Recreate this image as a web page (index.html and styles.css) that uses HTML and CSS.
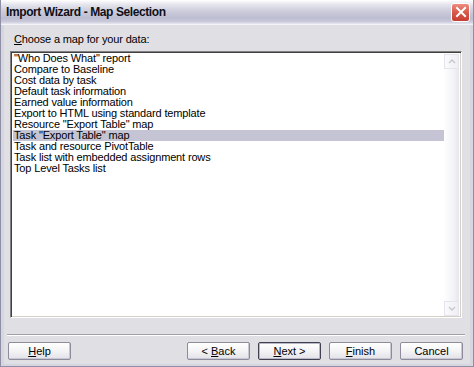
FILE: index.html
```html
<!DOCTYPE html>
<html lang="en">

<head>
    <meta charset="UTF-8">
    <title>Import Wizard - Map Selection</title>
    <link rel="stylesheet" href="styles.css">
</head>

<body>
    <div class="window">
        <div class="titlebar">
            <span class="title">Import Wizard - Map Selection</span>
            <span class="close">
                <svg width="12" height="12" viewBox="0 0 12 12">
                    <path d="M2 2 L10 10 M10 2 L2 10" stroke="#fff" stroke-width="2" stroke-linecap="square" />
                </svg>
            </span>
        </div>

        <div class="content">
            <div class="label"><u>C</u>hoose a map for your data:</div>

            <div class="listbox">
                <ul class="items">
                    <li>"Who Does What" report</li>
                    <li>Compare to Baseline</li>
                    <li>Cost data by task</li>
                    <li>Default task information</li>
                    <li>Earned value information</li>
                    <li>Export to HTML using standard template</li>
                    <li>Resource "Export Table" map</li>
                    <li class="selected">Task "Export Table" map</li>
                    <li>Task and resource PivotTable</li>
                    <li>Task list with embedded assignment rows</li>
                    <li>Top Level Tasks list</li>
                </ul>
                <div class="scrollbar">
                    <div class="arrow">
                        <svg width="8" height="5" viewBox="0 0 8 5">
                            <path d="M1 4 L4 1 L7 4" fill="none" stroke="#c8c8d4" stroke-width="1.5" />
                        </svg>
                    </div>
                    <div class="track"></div>
                    <div class="arrow">
                        <svg width="8" height="5" viewBox="0 0 8 5">
                            <path d="M1 1 L4 4 L7 1" fill="none" stroke="#c8c8d4" stroke-width="1.5" />
                        </svg>
                    </div>
                </div>
            </div>

            <div class="separator"></div>

            <div class="buttons">
                <button class="btn"><u>H</u>elp</button>
                <div class="spacer"></div>
                <button class="btn">&lt; <u>B</u>ack</button>
                <button class="btn default"><u>N</u>ext &gt;</button>
                <button class="btn"><u>F</u>inish</button>
                <button class="btn">Cancel</button>
            </div>
        </div>
    </div>
</body>

</html>
```

FILE: styles.css
```css
body {
    margin: 0;
    background-color: #e0dfe3;
    font-family: "Liberation Sans", Arial, sans-serif;
    font-size: 11px;
    color: #000;
}

.window {
    width: 474px;
    height: 367px;
    box-sizing: border-box;
    display: flex;
    flex-direction: column;
    background-color: #e0dfe3;
    border: 1px solid #8e8ea4;
    border-top: none;
}

.titlebar {
    height: 24px;
    display: flex;
    align-items: center;
    justify-content: space-between;
    padding: 0 3px 0 5px;
    background: linear-gradient(to bottom, #ffffff 0%, #e6e6ee 18%, #cdcddc 45%, #bdbdd2 75%, #c9c9da 90%, #e8e8f0 100%);
    border-bottom: 1px solid #f4f4f8;
}

.title {
    font-weight: bold;
    font-size: 12px;
    letter-spacing: -0.4px;
    color: #101018;
}

.close {
    width: 17px;
    height: 17px;
    display: flex;
    align-items: center;
    justify-content: center;
    border: 1px solid #fff;
    border-radius: 3px;
    background: linear-gradient(to bottom, #ec8d80 0%, #d8584a 50%, #c43e30 100%);
}

.content {
    flex: 1;
    display: flex;
    flex-direction: column;
    padding: 0 3px 3px 4px;
    border-left: 3px solid #d6d6e0;
    border-right: 3px solid #d6d6e0;
    border-bottom: 2px solid #d6d6e0;
}

.label {
    margin: 8px 0 0 6px;
    line-height: 13px;
    letter-spacing: -0.15px;
}

.listbox {
    margin: 5px 5px 0 2px;
    height: 267px;
    box-sizing: border-box;
    display: flex;
    background-color: #fff;
    border-top: 1px solid #808080;
    border-left: 1px solid #808080;
    border-right: 1px solid #fff;
    border-bottom: 1px solid #fff;
    box-shadow: inset 1px 1px 0 #404040, inset -1px -1px 0 #d4d0c8;
}

.items {
    flex: 1;
    list-style: none;
    margin: 0;
    padding: 1px 0 0 2px;
    letter-spacing: -0.15px;
}

.items li {
    height: 11px;
    line-height: 11px;
    padding-left: 1px;
    white-space: nowrap;
}

.items li.selected {
    background-color: #c4c4d4;
}

.scrollbar {
    width: 15px;
    margin: 2px 2px 1px 0;
    display: flex;
    flex-direction: column;
    background: linear-gradient(to right, #fefefe, #f4f4f8 60%, #e6e6ee);
}

.arrow {
    height: 15px;
    display: flex;
    align-items: center;
    justify-content: center;
    border: 1px solid #e4e4ec;
    box-sizing: border-box;
    background: linear-gradient(to right, #fbfbfd, #eeeef4);
}

.track {
    flex: 1;
}

.separator {
    margin: 16px 2px 0 -1px;
    height: 1px;
    background-color: #a0a0a8;
    border-bottom: 1px solid #fff;
}

.buttons {
    margin: 6px 4px 0 0;
    display: flex;
    gap: 8px;
}

.spacer {
    flex: 1;
}

.btn {
    width: 63px;
    height: 18px;
    padding: 0;
    font-family: "Liberation Sans", Arial, sans-serif;
    font-size: 11px;
    color: #000;
    border: 1px solid #8c8c9c;
    border-radius: 2px;
    background: linear-gradient(to bottom, #ffffff 0%, #f4f4f6 50%, #e2e2e8 100%);
    box-shadow: inset -1px -1px 0 #c8c8d4;
}

.btn.default {
    border: 1px solid #404050;
    box-shadow: inset 0 0 0 1px #b8b8c8;
}
```
